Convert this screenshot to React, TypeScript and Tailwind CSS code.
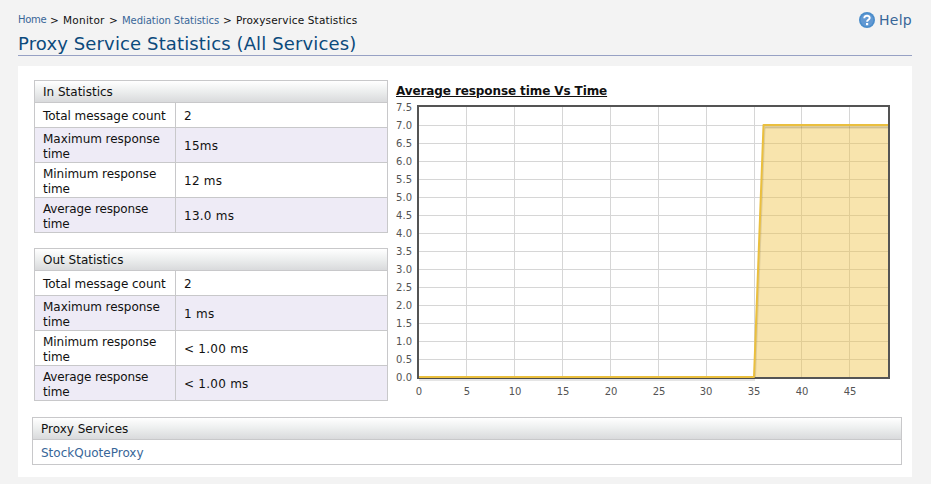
type Stat = { label: string; value: string };

const inStats: Stat[] = [
  { label: 'Total message count', value: '2' },
  { label: 'Maximum response time', value: '15ms' },
  { label: 'Minimum response time', value: '12 ms' },
  { label: 'Average response time', value: '13.0 ms' },
];
const outStats: Stat[] = [
  { label: 'Total message count', value: '2' },
  { label: 'Maximum response time', value: '1 ms' },
  { label: 'Minimum response time', value: '< 1.00 ms' },
  { label: 'Average response time', value: '< 1.00 ms' },
];

const gridX = [466, 514, 562, 610, 658, 706, 754, 801, 849];
const labelX = [419, 467, 515, 563, 611, 659, 706, 754, 802, 850];

function PanelHeader({ title }: { title: string }) {
  return (
    <div className="h-[22px] border-b border-[#c8c8ca] bg-linear-to-b from-white via-[#eceeee] to-[#d9dadc] pl-2 leading-[22px]">
      {title}
    </div>
  );
}

function StatsTable({ title, rows }: { title: string; rows: Stat[] }) {
  return (
    <div className="w-[354px] border border-b-0 border-[#c8c8ca]">
      <PanelHeader title={title} />
      {rows.map((row, i) => (
        <div
          key={row.label}
          className={`flex border-b border-[#c8c8ca] ${i === 0 ? 'h-[25px]' : 'h-[35px]'} ${i % 2 ? 'bg-[#eeebf6]' : 'bg-white'}`}
        >
          <div
            className={`flex w-[141px] items-center border-r border-[#c8c8ca] pl-2 leading-[15px] ${i === 0 ? 'pt-[2px]' : 'pt-[3px]'} ${i === 3 ? 'tracking-[-0.14px]' : 'tracking-[-0.04px]'}`}
          >
            {row.label}
          </div>
          <div className={`flex items-center pl-2 leading-[15px] tracking-[0.25px] ${i === 0 ? 'pt-[2px]' : 'pt-[3px]'}`}>
            {row.value}
          </div>
        </div>
      ))}
    </div>
  );
}

function Chart() {
  return (
    <svg width="500" height="300" viewBox="395 100 500 300" className="block" fontSize="10" fill="#545454">
      {gridX.map((x) => (
        <path key={x} d={`M${x + 0.5} 107V378`} stroke="#d6d6d6" />
      ))}
      {Array.from({ length: 14 }, (_, i) => (
        <path key={i} d={`M419 ${125.5 + i * 18}H889`} stroke="#d6d6d6" />
      ))}
      <rect x="418" y="106" width="471" height="272" fill="none" stroke="#545454" strokeWidth="2" />
      <path d="M419 379.5H755" fill="none" stroke="#000" strokeOpacity=".1" strokeWidth="3" />
      <path d="M754 377L763.5 125H888V377Z" fill="#eec142" fillOpacity=".43" />
      <path d="M755 377L764.5 127H888" fill="none" stroke="#000" strokeOpacity=".1" strokeWidth="2" />
      <path d="M765 128H888" fill="none" stroke="#000" strokeOpacity=".06" strokeWidth="2" />
      <path d="M419 377H754L763.5 125H888" fill="none" stroke="#eabf3e" strokeWidth="2" strokeLinejoin="round" />
      {Array.from({ length: 16 }, (_, i) => (
        <text key={i} x="396" y={111 + i * 18} letterSpacing="0.15">
          {(7.5 - i * 0.5).toFixed(1)}
        </text>
      ))}
      {labelX.map((x, i) => (
        <text key={x} x={x} y="395" textAnchor="middle">
          {i * 5}
        </text>
      ))}
    </svg>
  );
}

export default function App() {
  return (
    <div className="h-[484px] w-[931px] bg-[#f3f3f3] pr-[19px] pl-[18px] font-['DejaVu_Sans','Liberation_Sans',sans-serif] text-[12px] text-[#111]">
      <header className="flex h-[56px] justify-between border-b border-[#97a1c4]">
        <div className="pt-3">
          <nav className="flex h-4 text-[10.5px] leading-4 whitespace-pre">
            <a className="w-[32px] text-[10px] leading-[15px] tracking-[-0.3px] text-[#386698]">Home</a>
            <span className="w-[13px]">&gt;</span>
            <span className="w-[46px] tracking-[0.25px]">Monitor</span>
            <span className="w-[13px]">&gt;</span>
            <a className="w-[101px] pt-px text-[10px] tracking-[-0.05px] text-[#386698]">Mediation Statistics</a>
            <span className="w-[13px]">&gt;</span>
            <span className="tracking-[0.16px]">Proxyservice Statistics</span>
          </nav>
          <h1 className="pt-[4px] text-[18px] leading-[24px] tracking-[0.13px] whitespace-nowrap text-[#0b4a7c]">
            Proxy Service Statistics (All Services)
          </h1>
        </div>
        <a className="flex h-5 gap-[4px] pt-[10px] text-[14px] leading-5 text-[#386698]">
          <svg width="16" height="16" viewBox="0 0 16 16" className="mt-[2px]">
            <circle cx="8" cy="8" r="8" fill="#4a8dcb" />
            <circle cx="8" cy="8" r="6.3" fill="#6299d3" />
            <path d="M5.3 6.2C5.2 2.7 10.8 2.9 10.7 6C10.6 7.9 8.1 7.6 8.1 9.8" fill="none" stroke="#fff" strokeWidth="2" />
            <rect x="7" y="11" width="2.2" height="2.2" fill="#fff" />
          </svg>
          <span className="tracking-[0.25px]">Help</span>
        </a>
      </header>
      <main className="mt-[10px] h-[411px] bg-white pt-[14px] pl-[14px]">
        <div className="flex h-[337px] pl-[2px]">
          <div className="flex flex-col gap-[15px]">
            <StatsTable title="In Statistics" rows={inStats} />
            <StatsTable title="Out Statistics" rows={outStats} />
          </div>
          <div className="ml-[7px]">
            <h2 className="h-5 pt-[4px] pl-px leading-[15px] font-bold tracking-[-0.1px] underline">
              Average response time Vs Time
            </h2>
            <Chart />
          </div>
        </div>
        <section className="h-[48px] w-[870px] border border-[#c8c8ca]">
          <PanelHeader title="Proxy Services" />
          <a className="block pt-px pl-2 leading-[25px] text-[#386698]">StockQuoteProxy</a>
        </section>
      </main>
    </div>
  );
}
